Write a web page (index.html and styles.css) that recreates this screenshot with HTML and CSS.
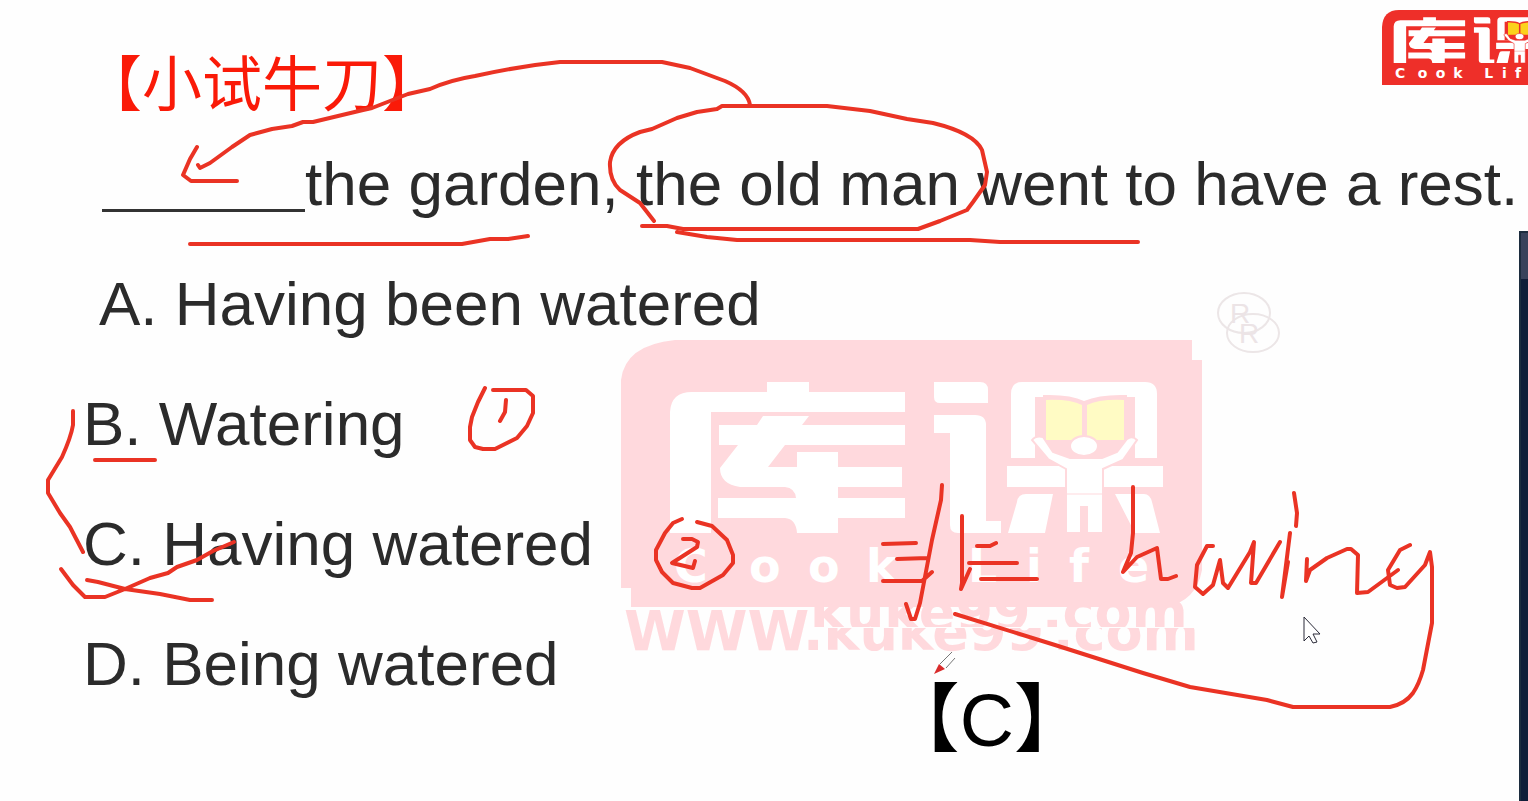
FILE: index.html
```html
<!DOCTYPE html>
<html lang="zh-CN">
<head>
<meta charset="utf-8">
<title>小试牛刀</title>
<link rel="stylesheet" href="styles.css">
</head>
<body>
<main class="slide">
  <svg class="layer watermark" viewBox="0 0 1528 801" aria-hidden="true">
    <defs>
      <g id="ku-ke">
        <path d="M670 533V412Q671 392 692 392H767V382H809V392H905V412H711V533Z"/>
        <path d="M719 425H757L763 416H809L802 425H905V445H785L768 467H797V452H838V467H902V487H838V498H905V518H838V533H797Q796 519 785 518H718V498H796Q795 488 785 487H740Q720 484 720 468L738 445H719Z"/>
        <path d="M934 382H980Q988 382 988 390V403H940Q934 403 934 397ZM934 415H975Q986 415 986 425V521H1001V533H958Q950 533 950 525V433H934Z"/>
        <path d="M1022 382H1145Q1157 382 1157 394V458H1011V394Q1011 382 1022 382ZM1007 466H1163V487H1007ZM1026 494H1053L1045 533H1008L1017 502Q1018 494 1026 494ZM1115 494H1144Q1150 494 1152 502L1160 533H1135Z"/>
        <path class="logo-bg" d="M1035 397H1043V395Q1070 394 1084 401Q1100 394 1127 395V397H1135V458H1035Z"/>
        <path class="logo-page" d="M1046 400Q1070 399 1082 405V440H1046ZM1124 400Q1099 399 1087 405V440H1124Z"/>
        <path class="logo-person" d="M1032 440Q1036 435 1043 437L1053 452L1070 458H1102L1117 452L1127 439Q1132 435 1137 440L1123 460L1103 469V533H1087V507H1081V533H1066V469L1048 459Z"/>
        <ellipse class="logo-person" cx="1084" cy="446" rx="14" ry="10"/>
        <path class="logo-seam" d="M1066 494H1103"/>
        <text class="logo-name" y="582" x="674 749 808 866 884 968 1026 1069 1118">Cook Life</text>
      </g>
      <clipPath id="upper"><path d="M800 600H1230V627H800Z"/></clipPath>
      <clipPath id="lower"><path d="M800 628H1230V652H800Z"/></clipPath>
    </defs>
    <path class="pink" d="M621 380Q625 345 675 340H1192V360H1202V570Q1196 602 1165 607H631V588H621Z"/>
    <use href="#ku-ke" class="logo-pale"/>
    <g class="pink">
      <text class="url-www" x="624" y="650">WWW</text>
      <g clip-path="url(#upper)" class="url"><text x="810" y="630">kuke99</text><text x="1042" y="630">.com</text></g>
      <g clip-path="url(#lower)" class="url"><text x="803" y="650">.kuke99</text><text x="1053" y="650">.com</text></g>
    </g>
    <g class="registered">
      <ellipse cx="1244" cy="313" rx="26" ry="20"/><ellipse cx="1253" cy="333" rx="26" ry="19"/>
      <text x="1230" y="323">R</text><text x="1239" y="343">R</text>
    </g>
    <path class="logo-red" d="M1382 85V27Q1383 10 1399 10H1528V85Z"/>
    <use href="#ku-ke" class="logo-bright" transform="translate(1190 -99) scale(.304)"/>
  </svg>

  <h1 class="heading">【小试牛刀】</h1>
  <p class="question"><span class="blank"></span>the garden, the old man went to have a rest.</p>
  <div class="body">
    <ul class="options">
      <li class="option option-first">A. Having been watered</li>
      <li class="option">B. Watering</li>
      <li class="option">C. Having watered</li>
      <li class="option">D. Being watered</li>
    </ul>
    <p class="answer">【C】</p>
  </div>

  <aside class="side-panel"><div class="side-panel-head"></div></aside>

  <svg class="layer" viewBox="0 0 1528 801" aria-hidden="true">
    <g class="ink">
      <path d="M197 147L190 159L183 175L191 181H237M198 165L200 168L210 163L232 147L250 135L272 129L292 126L303 122L313 122L363 110L372 108L390 101L408 94L430 89Q450 80 475 76Q520 66 560 62H662L690 68L725 81Q748 91 750 105"/>
      <path d="M654 221L640 203L620 190Q609 180 610 162Q613 142 640 132L652 129L677 118L697 112L717 109L722 106H827L870 111L907 119L933 123Q974 133 982 150L987 172L985 185L973 202L967 210L940 221L918 229H683L667 226H642"/>
      <path d="M677 232L707 237L737 240H970L1000 242H1138M190 244H462L490 239H508L528 236"/>
      <path d="M73 411V425Q71 437 62 457L48 480V493L60 513L70 527L83 552M95 460H155"/>
      <path d="M61 569L73 585L85 597H105L125 589L150 578L168 573L177 567L197 560L213 551L234 542M87 580L98 582L125 589L160 594L190 600H212"/>
      <path d="M485 388L478 402L472 417L470 427V440L475 447L483 449H495L517 438L527 426L533 413V396L526 390H493M506 400L505 412L500 421"/>
      <path d="M682 519L673 523L665 533L656 550V560L662 572L673 583L692 588H700L723 575L733 563V555L727 540L712 526L697 522M683 539H692L698 542L697 547L672 563L693 568L695 561"/>
      <path d="M883 544L916 543M897 559L928 558M883 581H922L932 572M942 485L941 500L932 540L920 603L915 619H911L906 604"/>
      <path d="M962 516V583L961 589L970 569M977 546H990L996 543M969 563H1017M981 579H1037"/>
      <path d="M1133 487V533L1131 553L1123 572L1137 557L1157 548L1161 579H1168L1176 576M1213 546H1207L1197 565L1195 587L1203 594L1213 585L1220 560L1223 583L1228 588L1250 552L1254 542L1251 583H1256L1280 542"/>
      <path d="M1290 533L1282 597L1288 562M1294 493L1297 513L1296 526M1307 559L1306 581L1310 570L1327 558L1347 549H1351L1358 555L1357 593L1368 592L1398 570"/>
      <path d="M1410 545L1400 550L1388 570L1390 585L1397 588L1405 587L1425 565L1430 552L1432 567V623L1423 670Q1419 684 1413 693Q1405 704 1390 707H1293L1267 700L1190 687L1143 673L1055 645L955 614"/>
    </g>
    <path class="pen-body" d="M940 664L952 652M946 668L955 658"/>
    <path class="pen-tip" d="M934 674L939 664L945 669Z"/>
    <path class="cursor" d="M1304 617V641L1309 636L1313 643L1317 642L1313 634L1320 634Z"/>
  </svg>
</main>
</body>
</html>
```
FILE: styles.css
```css
* { box-sizing: border-box; }

body {
  margin: 0;
  background: #fefefe;
  color: #2b2b2b;
  font-family: "Liberation Sans", "Noto Sans CJK SC", sans-serif;
}

.slide {
  position: relative;
  min-height: 100vh;
  overflow: hidden;
  padding-top: 44px;
}

.layer {
  position: absolute;
  top: 0;
  left: 0;
  width: 100%;
  pointer-events: none;
}

.heading,
.question,
.body { position: relative; margin: 0; }

.heading {
  margin-bottom: 8px;
  padding-left: 82px;
  color: #fa1a08;
  font-family: "Noto Sans CJK SC", sans-serif;
  font-size: 60px;
  font-weight: 400;
  line-height: 72px;
}

.question {
  display: flex;
  align-items: center;
  padding-left: 102px;
  font-size: 62px;
  line-height: 120px;
  white-space: nowrap;
}

.blank {
  width: 203px;
  height: 56px;
  border-bottom: 3px solid #333;
}

.body {
  display: grid;
  grid-template-columns: 11fr 8fr;
}

.options {
  margin: 0;
  padding: 0 0 0 83px;
  list-style: none;
}

.option {
  font-size: 62px;
  line-height: 120px;
  white-space: nowrap;
}

.option-first { padding-left: 16px; }

.answer {
  align-self: end;
  margin: 0 0 -48px;
  color: #000;
  font-size: 75px;
  line-height: 104px;
}

.side-panel {
  position: absolute;
  top: 231px;
  right: 0;
  bottom: 0;
  width: 9px;
  border: solid #1c2c3e;
  border-width: 2px 0 0 2px;
  background: #101d38;
}

.side-panel-head { height: 46px; background: #38425b; }

.pink { fill: #ffd9dd; }
.logo-pale { fill: #fff; color: #ffd9dd; --page: #fffbc4; }
.logo-bright { fill: #fff; color: #ee2f29; --page: #fbd21c; }
.logo-red { fill: #ee2f29; }
.logo-bg { fill: currentColor; }
.logo-page { fill: var(--page); }
.logo-person { stroke: currentColor; stroke-width: 2; }
.logo-seam { stroke: currentColor; stroke-width: 1; }

.logo-name { font: bold 46px "DejaVu Sans", sans-serif; }
.url-www { font: bold 56px "DejaVu Sans", sans-serif; }
.url { font: bold 54px "DejaVu Sans", sans-serif; }

.registered {
  fill: none;
  stroke: #ece6e7;
  stroke-width: 2;
}

.registered text {
  fill: #ece4e6;
  stroke: none;
  font: 28px "Liberation Sans", sans-serif;
}

.ink {
  fill: none;
  stroke: #ea3324;
  stroke-width: 4;
  stroke-linecap: round;
  stroke-linejoin: round;
}

.pen-body { fill: none; stroke: #777; stroke-width: 1; }
.pen-tip { fill: #d92b2b; }
.cursor { fill: #fff; stroke: #2a2a38; stroke-width: 1; }
```
